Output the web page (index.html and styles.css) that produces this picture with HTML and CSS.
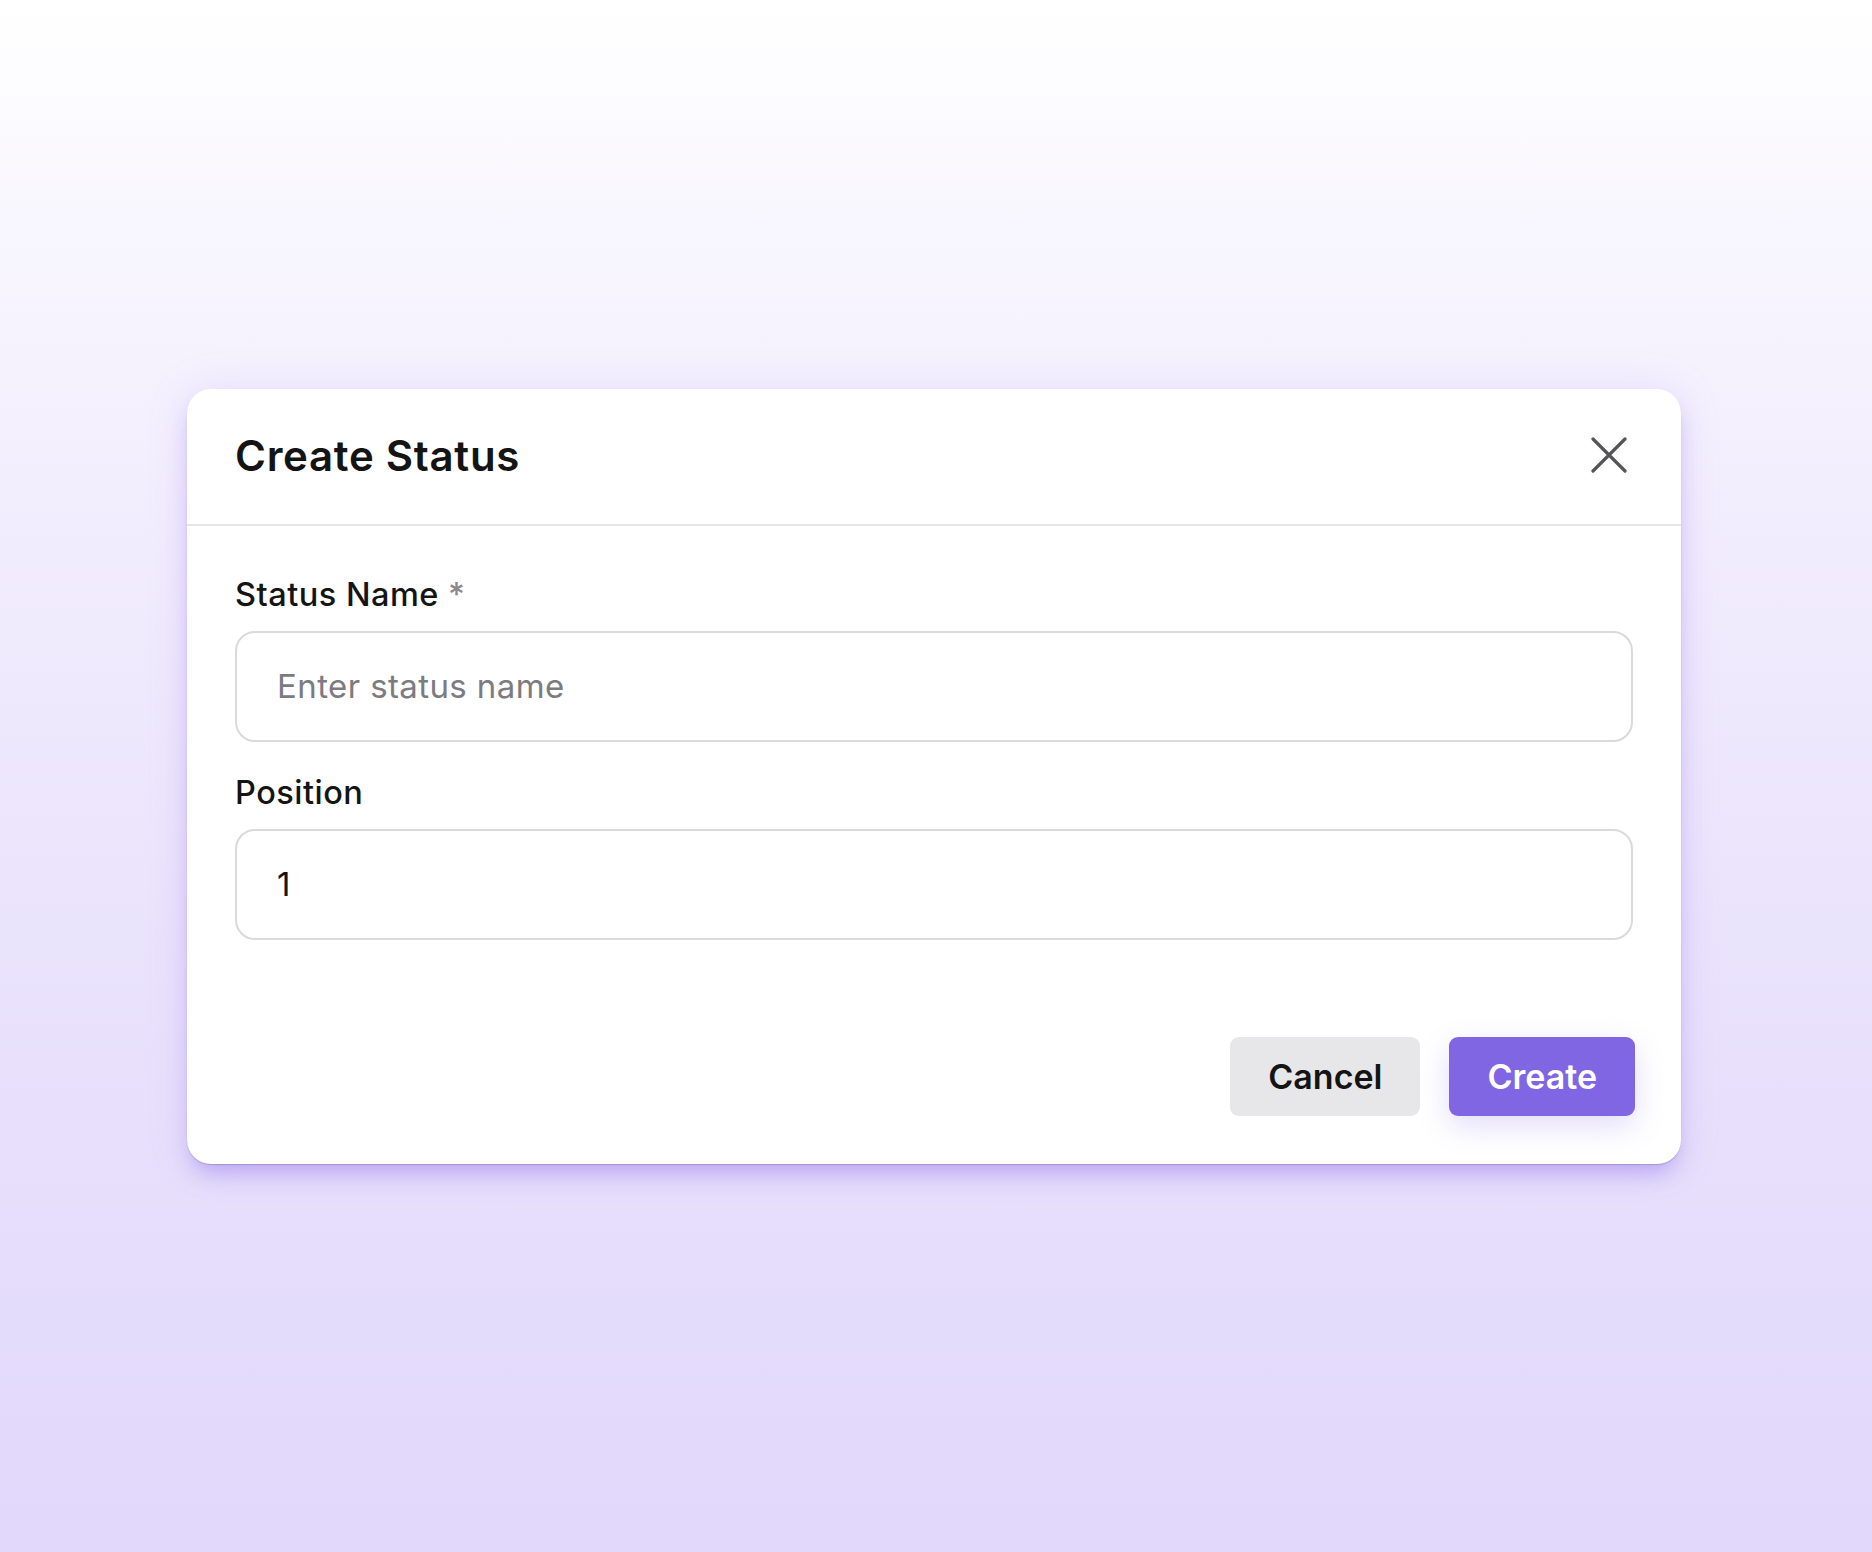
FILE: index.html
```html
<!DOCTYPE html>
<html lang="en">
<head>
<meta charset="utf-8">
<title>Create Status</title>
<link rel="stylesheet" href="styles.css">
</head>
<body>
<main class="stage">
  <section class="modal" role="dialog" aria-labelledby="modal-title">
    <header class="modal-header">
      <h2 id="modal-title" class="modal-title">Create Status</h2>
      <button class="close-btn" type="button" aria-label="Close">
        <svg width="36" height="36" viewBox="0 0 36 36" fill="none" stroke="currentColor" stroke-width="3.2" stroke-linecap="round">
          <path d="M2 2 L34 34 M34 2 L2 34"/>
        </svg>
      </button>
    </header>
    <div class="modal-body">
      <div class="field">
        <label class="field-label" for="status-name">Status Name <span class="req">*</span></label>
        <input id="status-name" class="field-input" type="text" placeholder="Enter status name">
      </div>
      <div class="field">
        <label class="field-label" for="position">Position</label>
        <input id="position" class="field-input" type="text" value="1">
      </div>
    </div>
    <footer class="modal-footer">
      <button class="btn btn-cancel" type="button">Cancel</button>
      <button class="btn btn-create" type="button">Create</button>
    </footer>
  </section>
</main>
</body>
</html>
```

FILE: styles.css
```css
* { box-sizing: border-box; }

html, body {
  margin: 0;
  padding: 0;
}

body {
  font-family: Inter, "Noto Sans", "Liberation Sans", sans-serif;
  color: #141414;
  background: linear-gradient(180deg, #ffffff 0%, #f8f6fe 15%, #f1ecfd 35%, #eae3fc 60%, #e4dcfb 85%, #e1d8fb 100%);
  min-height: 100vh;
}

.stage {
  min-height: 100vh;
  padding-right: 4px;
  display: flex;
  align-items: center;
  justify-content: center;
}

.modal {
  width: 1494px;
  background: #ffffff;
  border-radius: 24px;
  box-shadow:
    0 1px 1px rgba(60, 60, 70, 0.22),
    0 14px 22px -6px rgba(160, 130, 238, 0.6),
    0 0 40px rgba(170, 145, 245, 0.18);
}

.modal-header {
  height: 137px;
  padding: 0 48px 2px 48px;
  display: flex;
  align-items: center;
  justify-content: space-between;
  border-bottom: 2px solid #e6e6ea;
}

.modal-title {
  margin: 0;
  font-size: 42px;
  font-weight: 600;
  letter-spacing: 0.7px;
  color: #141414;
}

.close-btn {
  border: 0;
  background: none;
  padding: 0;
  margin-right: 6px;
  color: #555558;
  display: flex;
  cursor: pointer;
}

.modal-body {
  padding: 45px 48px 48px 48px;
  display: flex;
  flex-direction: column;
  gap: 27px;
}

.field {
  display: flex;
  flex-direction: column;
  gap: 12px;
}

.field-label {
  font-size: 32.5px;
  line-height: 48px;
  font-weight: 500;
  letter-spacing: 0.5px;
  color: #141414;
}

.req {
  color: #8a8a8e;
  font-weight: 500;
}

.field-input {
  height: 111px;
  width: 100%;
  border: 2px solid #dadade;
  border-radius: 20px;
  padding: 0 40px;
  font-family: inherit;
  font-size: 33px;
  letter-spacing: 0.4px;
  color: #141414;
  background: #ffffff;
  outline: none;
}

.field-input::placeholder {
  color: #7b7b80;
}

.modal-footer {
  padding: 49px 46px 48px 48px;
  display: flex;
  justify-content: flex-end;
  gap: 29px;
}

.btn {
  height: 79px;
  border: 0;
  border-radius: 9px;
  padding: 0 38px;
  font-family: inherit;
  font-size: 34px;
  font-weight: 600;
  cursor: pointer;
}

.btn-cancel {
  background: #e7e7ea;
  color: #141414;
}

.btn-create {
  background: #8066e2;
  color: #ffffff;
  box-shadow: 0 10px 30px rgba(128, 102, 226, 0.22);
}
```
